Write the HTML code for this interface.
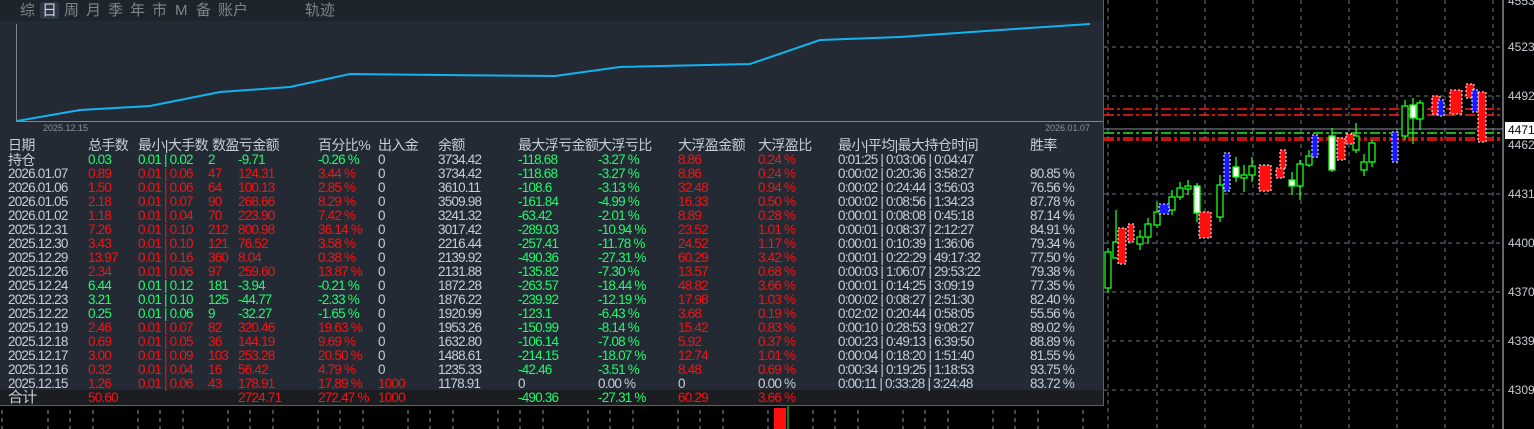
<!DOCTYPE html>
<html><head><meta charset="utf-8"><style>
*{margin:0;padding:0;box-sizing:border-box}
body{width:1534px;height:429px;background:#000;position:relative;overflow:hidden;font-family:"Liberation Sans","Noto Sans CJK SC",sans-serif}
#panel{position:absolute;left:0;top:0;width:1104px;height:406px;background:#232a33;border-right:1px solid #5a6270;border-bottom:1px solid #5a6270}
#tabs{position:absolute;left:0;top:0;width:1103px;height:21px;background:#1e242b}
#tabs span{position:absolute;top:2px;font-size:15px;color:#7d848d;line-height:17px}
#tabs .on{background:#2e3744;color:#c9d6ea;padding:0 2px;margin-left:-2px;border-radius:2px}
.r{position:absolute;left:0;width:1103px;height:14px;line-height:14px;font-size:13.5px;letter-spacing:-0.8px;color:#c6cedb;white-space:nowrap}
.r span{position:absolute}
.h{font-size:14px;letter-spacing:-0.6px;height:16px;line-height:16px}
.g{color:#19ff6c}.d{color:#ff1010}
.c0{left:8px}.c1{left:88px}.c2{left:138px}.c3{left:208px}.c4{left:238px}.c5{left:318px}.c6{left:378px}.c7{left:438px}.c8{left:518px}.c9{left:598px}.c10{left:678px}.c11{left:758px}.c12{left:838px}.c13{left:1030px}
#tot{position:absolute;left:0;top:390px;width:1103px;height:15px;background:#1b1d21}
.ax{position:absolute;left:1508px;font-size:12px;color:#c8ccd2}
</style></head><body>
<svg style="position:absolute;left:0;top:0" width="1534" height="429">
<g stroke="#6b7888" stroke-dasharray="4,4" stroke-width="1">
<line x1="1104" y1="47" x2="1503" y2="47"/><line x1="1104" y1="96" x2="1503" y2="96"/><line x1="1104" y1="194" x2="1503" y2="194"/><line x1="1104" y1="243" x2="1503" y2="243"/><line x1="1104" y1="292" x2="1503" y2="292"/><line x1="1104" y1="341" x2="1503" y2="341"/><line x1="1104" y1="390" x2="1503" y2="390"/>
<line x1="1108" y1="0" x2="1108" y2="429"/><line x1="1157" y1="0" x2="1157" y2="429"/><line x1="1205" y1="0" x2="1205" y2="429"/><line x1="1253" y1="0" x2="1253" y2="429"/><line x1="1301" y1="0" x2="1301" y2="429"/><line x1="1349" y1="0" x2="1349" y2="429"/><line x1="1397" y1="0" x2="1397" y2="429"/><line x1="1445" y1="0" x2="1445" y2="429"/><line x1="1493" y1="0" x2="1493" y2="429"/>
</g>
<g stroke="#8a95a3" stroke-dasharray="4,4">
<line x1="2" y1="410" x2="2" y2="429"/><line x1="48" y1="410" x2="48" y2="429"/><line x1="70" y1="410" x2="70" y2="429"/><line x1="93" y1="410" x2="93" y2="429"/><line x1="138" y1="410" x2="138" y2="429"/><line x1="160" y1="410" x2="160" y2="429"/><line x1="183" y1="410" x2="183" y2="429"/><line x1="228" y1="410" x2="228" y2="429"/><line x1="250" y1="410" x2="250" y2="429"/><line x1="273" y1="410" x2="273" y2="429"/><line x1="318" y1="410" x2="318" y2="429"/><line x1="340" y1="410" x2="340" y2="429"/><line x1="363" y1="410" x2="363" y2="429"/><line x1="408" y1="410" x2="408" y2="429"/><line x1="430" y1="410" x2="430" y2="429"/><line x1="453" y1="410" x2="453" y2="429"/><line x1="498" y1="410" x2="498" y2="429"/><line x1="520" y1="410" x2="520" y2="429"/><line x1="543" y1="410" x2="543" y2="429"/><line x1="588" y1="410" x2="588" y2="429"/><line x1="610" y1="410" x2="610" y2="429"/><line x1="633" y1="410" x2="633" y2="429"/><line x1="678" y1="410" x2="678" y2="429"/><line x1="700" y1="410" x2="700" y2="429"/><line x1="723" y1="410" x2="723" y2="429"/><line x1="768" y1="410" x2="768" y2="429"/><line x1="813" y1="410" x2="813" y2="429"/><line x1="835" y1="410" x2="835" y2="429"/><line x1="858" y1="410" x2="858" y2="429"/><line x1="903" y1="410" x2="903" y2="429"/><line x1="925" y1="410" x2="925" y2="429"/><line x1="948" y1="410" x2="948" y2="429"/><line x1="993" y1="410" x2="993" y2="429"/><line x1="1015" y1="410" x2="1015" y2="429"/><line x1="1038" y1="410" x2="1038" y2="429"/><line x1="1083" y1="410" x2="1083" y2="429"/>
</g>
<rect x="774" y="408" width="12" height="21" fill="#ff1010"/><line x1="788" y1="406" x2="788" y2="429" stroke="#19ff2a"/>
<line x1="1503" y1="0" x2="1503" y2="429" stroke="#c8ccd2"/>
<g stroke-width="1.5" stroke-dasharray="10,3,3,3"><line x1="1104" y1="109" x2="1503" y2="109" stroke="#ff1a1a"/><line x1="1104" y1="115" x2="1503" y2="115" stroke="#ff1a1a"/><line x1="1104" y1="133" x2="1503" y2="133" stroke="#22ee22"/><line x1="1104" y1="138" x2="1503" y2="138" stroke="#ff1a1a"/><line x1="1104" y1="140" x2="1503" y2="140" stroke="#ff1a1a"/></g>
<line x1="1104" y1="129" x2="1503" y2="129" stroke="#8a929c"/>
<g stroke="#19ff19" stroke-width="1.3" fill="#000">
<line x1="1108" y1="248" x2="1108" y2="293"/><rect x="1105" y="252" width="6" height="36"/>
<line x1="1116" y1="210" x2="1116" y2="258"/><rect x="1113" y="242" width="6" height="16"/>
<line x1="1140" y1="230" x2="1140" y2="250"/><rect x="1137" y="237" width="6" height="7"/>
<line x1="1148" y1="218" x2="1148" y2="244"/><rect x="1145" y="224" width="6" height="13"/>
<line x1="1157" y1="202" x2="1157" y2="228"/><rect x="1154" y="212" width="6" height="13"/>
<line x1="1172" y1="190" x2="1172" y2="215"/><rect x="1169" y="197" width="6" height="13"/>
<line x1="1180" y1="182" x2="1180" y2="200"/><rect x="1177" y="188" width="6" height="9"/>
<line x1="1188" y1="180" x2="1188" y2="195"/><rect x="1185" y="186" width="6" height="3"/>
<line x1="1197" y1="183" x2="1197" y2="222"/><rect x="1194" y="186" width="6" height="27" fill="#fff"/>
<line x1="1220" y1="175" x2="1220" y2="222"/><rect x="1217" y="185" width="6" height="32"/>
<line x1="1236" y1="157" x2="1236" y2="182"/><rect x="1233" y="167" width="6" height="10" fill="#fff"/>
<line x1="1244" y1="165" x2="1244" y2="192"/><rect x="1241" y="175" width="6" height="3"/>
<line x1="1252" y1="157" x2="1252" y2="182"/><rect x="1249" y="166" width="6" height="9"/>
<line x1="1292" y1="172" x2="1292" y2="195"/><rect x="1289" y="180" width="6" height="6" fill="#fff"/>
<line x1="1300" y1="160" x2="1300" y2="200"/><rect x="1297" y="164" width="6" height="22"/>
<line x1="1309" y1="150" x2="1309" y2="167"/><rect x="1306" y="156" width="6" height="9"/>
<line x1="1332" y1="128" x2="1332" y2="172"/><rect x="1329" y="136" width="6" height="34" fill="#fff"/>
<line x1="1356" y1="123" x2="1356" y2="153"/><rect x="1353" y="136" width="6" height="14"/>
<line x1="1364" y1="154" x2="1364" y2="176"/><rect x="1361" y="162" width="6" height="8"/>
<line x1="1372" y1="140" x2="1372" y2="167"/><rect x="1369" y="143" width="6" height="19"/>
<line x1="1405" y1="100" x2="1405" y2="140"/><rect x="1402" y="106" width="6" height="30"/>
<line x1="1413" y1="98" x2="1413" y2="144"/><rect x="1410" y="105" width="6" height="13" fill="#fff"/>
<line x1="1420" y1="100" x2="1420" y2="130"/><rect x="1417" y="103" width="6" height="16"/>
</g>
<g fill="#ff1010" stroke="#fff" stroke-width="1" stroke-dasharray="2,2">
<rect x="1118" y="228" width="8" height="36"/><rect x="1128" y="224" width="6" height="18"/><rect x="1199" y="212" width="12" height="26"/><rect x="1259" y="165" width="12" height="26"/><rect x="1276" y="168" width="8" height="10"/><rect x="1280" y="150" width="6" height="18"/><rect x="1337" y="138" width="8" height="22"/><rect x="1346" y="134" width="8" height="10"/><rect x="1432" y="96" width="8" height="18"/><rect x="1450" y="90" width="12" height="24"/><rect x="1466" y="84" width="8" height="14"/><rect x="1478" y="92" width="8" height="50"/>
</g>
<g fill="#1a1aff" stroke="#fff" stroke-width="1" stroke-dasharray="2,2"><rect x="1224" y="153" width="6" height="38"/><rect x="1159" y="204" width="10" height="10"/><rect x="1312" y="135" width="6" height="22"/><rect x="1392" y="132" width="6" height="30"/><rect x="1438" y="100" width="6" height="16"/><rect x="1472" y="90" width="6" height="22"/></g>
<rect x="1505" y="122" width="29" height="17" fill="#fff"/>
</svg>
<div class="ax" style="top:-6px">4553</div><div class="ax" style="top:40px">4523</div><div class="ax" style="top:89px">4492</div><div class="ax" style="top:123px;color:#000">4471</div><div class="ax" style="top:138px">4462</div><div class="ax" style="top:187px">4431</div><div class="ax" style="top:236px">4400</div><div class="ax" style="top:285px">4370</div><div class="ax" style="top:334px">4339</div><div class="ax" style="top:383px">4309</div>

<div id="panel">
<div id="tabs"><span style="left:20px">综</span><span class="on" style="left:42px">日</span><span style="left:64px">周</span><span style="left:86px">月</span><span style="left:108px">季</span><span style="left:130px">年</span><span style="left:152px">市</span><span style="left:175px">M</span><span style="left:196px">备</span><span style="left:218px">账户</span><span style="left:305px">轨迹</span></div>
<svg style="position:absolute;left:0;top:0" width="1103" height="140">
<line x1="16.5" y1="24" x2="16.5" y2="122" stroke="#7d848d"/><line x1="16" y1="121.5" x2="1103" y2="121.5" stroke="#7d848d"/>
<polyline fill="none" stroke="#10b4f0" stroke-width="2" points="17,121 80,110 150,106 220,92 290,87 350,74 440,75 555,76 620,67 750,64 820,40 900,37 1000,30 1090,24"/>
<text x="43" y="131" font-size="9" fill="#8a929c" font-family="Liberation Sans">2025.12.15</text>
<text x="1045" y="131" font-size="9" fill="#8a929c" font-family="Liberation Sans">2026.01.07</text>
</svg>
<div id="tot"></div>
<div class="r h" style="top:137px"><span class="c0">日期</span><span class="c1">总手数</span><span class="c2">最小|大手数</span><span style="left:212px">数盈亏金额</span><span class="c5">百分比%</span><span style="left:378px">出入金</span><span class="c7">余额</span><span class="c8">最大浮亏金额</span><span style="left:598px">大浮亏比</span><span style="left:678px">大浮盈金额</span><span style="left:758px">大浮盈比</span><span style="left:838px">最小|平均|最大持仓时间</span><span class="c13">胜率</span></div>
<div class="r h" style="top:152px"><span class="c0">持仓</span></div>
<div class="r g" style="top:153px"><span class="c1">0.03</span><span class="c2">0.01 | 0.02</span><span class="c3">2</span><span class="c4">-9.71</span><span class="c5">-0.26 %</span><span class="c6" style="color:#c6cedb">0</span><span class="c7" style="color:#c6cedb">3734.42</span><span class="c8">-118.68</span><span class="c9">-3.27 %</span><span class="c10 d">8.86</span><span class="c11 d">0.24 %</span><span class="c12" style="color:#c6cedb">0:01:25 | 0:03:06 | 0:04:47</span></div>

<div class="r" style="top:167px"><span class="c0">2026.01.07</span><span class="c1 d">0.89</span><span class="c2 d">0.01 | 0.06</span><span class="c3 d">47</span><span class="c4 d">124.31</span><span class="c5 d">3.44 %</span><span class="c6">0</span><span class="c7">3734.42</span><span class="c8 g">-118.68</span><span class="c9 g">-3.27 %</span><span class="c10 d">8.86</span><span class="c11 d">0.24 %</span><span class="c12">0:00:02 | 0:20:36 | 3:58:27</span><span class="c13">80.85 %</span></div>
<div class="r" style="top:181px"><span class="c0">2026.01.06</span><span class="c1 d">1.50</span><span class="c2 d">0.01 | 0.06</span><span class="c3 d">64</span><span class="c4 d">100.13</span><span class="c5 d">2.85 %</span><span class="c6">0</span><span class="c7">3610.11</span><span class="c8 g">-108.6</span><span class="c9 g">-3.13 %</span><span class="c10 d">32.48</span><span class="c11 d">0.94 %</span><span class="c12">0:00:02 | 0:24:44 | 3:56:03</span><span class="c13">76.56 %</span></div>
<div class="r" style="top:195px"><span class="c0">2026.01.05</span><span class="c1 d">2.18</span><span class="c2 d">0.01 | 0.07</span><span class="c3 d">90</span><span class="c4 d">268.66</span><span class="c5 d">8.29 %</span><span class="c6">0</span><span class="c7">3509.98</span><span class="c8 g">-161.84</span><span class="c9 g">-4.99 %</span><span class="c10 d">16.33</span><span class="c11 d">0.50 %</span><span class="c12">0:00:02 | 0:08:56 | 1:34:23</span><span class="c13">87.78 %</span></div>
<div class="r" style="top:209px"><span class="c0">2026.01.02</span><span class="c1 d">1.18</span><span class="c2 d">0.01 | 0.04</span><span class="c3 d">70</span><span class="c4 d">223.90</span><span class="c5 d">7.42 %</span><span class="c6">0</span><span class="c7">3241.32</span><span class="c8 g">-63.42</span><span class="c9 g">-2.01 %</span><span class="c10 d">8.89</span><span class="c11 d">0.28 %</span><span class="c12">0:00:01 | 0:08:08 | 0:45:18</span><span class="c13">87.14 %</span></div>
<div class="r" style="top:223px"><span class="c0">2025.12.31</span><span class="c1 d">7.26</span><span class="c2 d">0.01 | 0.10</span><span class="c3 d">212</span><span class="c4 d">800.98</span><span class="c5 d">36.14 %</span><span class="c6">0</span><span class="c7">3017.42</span><span class="c8 g">-289.03</span><span class="c9 g">-10.94 %</span><span class="c10 d">23.52</span><span class="c11 d">1.01 %</span><span class="c12">0:00:01 | 0:08:37 | 2:12:27</span><span class="c13">84.91 %</span></div>
<div class="r" style="top:237px"><span class="c0">2025.12.30</span><span class="c1 d">3.43</span><span class="c2 d">0.01 | 0.10</span><span class="c3 d">121</span><span class="c4 d">76.52</span><span class="c5 d">3.58 %</span><span class="c6">0</span><span class="c7">2216.44</span><span class="c8 g">-257.41</span><span class="c9 g">-11.78 %</span><span class="c10 d">24.52</span><span class="c11 d">1.17 %</span><span class="c12">0:00:01 | 0:10:39 | 1:36:06</span><span class="c13">79.34 %</span></div>
<div class="r" style="top:251px"><span class="c0">2025.12.29</span><span class="c1 d">13.97</span><span class="c2 d">0.01 | 0.16</span><span class="c3 d">360</span><span class="c4 d">8.04</span><span class="c5 d">0.38 %</span><span class="c6">0</span><span class="c7">2139.92</span><span class="c8 g">-490.36</span><span class="c9 g">-27.31 %</span><span class="c10 d">60.29</span><span class="c11 d">3.42 %</span><span class="c12">0:00:01 | 0:22:29 | 49:17:32</span><span class="c13">77.50 %</span></div>
<div class="r" style="top:265px"><span class="c0">2025.12.26</span><span class="c1 d">2.34</span><span class="c2 d">0.01 | 0.06</span><span class="c3 d">97</span><span class="c4 d">259.60</span><span class="c5 d">13.87 %</span><span class="c6">0</span><span class="c7">2131.88</span><span class="c8 g">-135.82</span><span class="c9 g">-7.30 %</span><span class="c10 d">13.57</span><span class="c11 d">0.68 %</span><span class="c12">0:00:03 | 1:06:07 | 29:53:22</span><span class="c13">79.38 %</span></div>
<div class="r" style="top:279px"><span class="c0">2025.12.24</span><span class="c1 g">6.44</span><span class="c2 g">0.01 | 0.12</span><span class="c3 g">181</span><span class="c4 g">-3.94</span><span class="c5 g">-0.21 %</span><span class="c6">0</span><span class="c7">1872.28</span><span class="c8 g">-263.57</span><span class="c9 g">-18.44 %</span><span class="c10 d">48.82</span><span class="c11 d">3.66 %</span><span class="c12">0:00:01 | 0:14:25 | 3:09:19</span><span class="c13">77.35 %</span></div>
<div class="r" style="top:293px"><span class="c0">2025.12.23</span><span class="c1 g">3.21</span><span class="c2 g">0.01 | 0.10</span><span class="c3 g">125</span><span class="c4 g">-44.77</span><span class="c5 g">-2.33 %</span><span class="c6">0</span><span class="c7">1876.22</span><span class="c8 g">-239.92</span><span class="c9 g">-12.19 %</span><span class="c10 d">17.98</span><span class="c11 d">1.03 %</span><span class="c12">0:00:02 | 0:08:27 | 2:51:30</span><span class="c13">82.40 %</span></div>
<div class="r" style="top:307px"><span class="c0">2025.12.22</span><span class="c1 g">0.25</span><span class="c2 g">0.01 | 0.06</span><span class="c3 g">9</span><span class="c4 g">-32.27</span><span class="c5 g">-1.65 %</span><span class="c6">0</span><span class="c7">1920.99</span><span class="c8 g">-123.1</span><span class="c9 g">-6.43 %</span><span class="c10 d">3.68</span><span class="c11 d">0.19 %</span><span class="c12">0:02:02 | 0:20:44 | 0:58:05</span><span class="c13">55.56 %</span></div>
<div class="r" style="top:321px"><span class="c0">2025.12.19</span><span class="c1 d">2.46</span><span class="c2 d">0.01 | 0.07</span><span class="c3 d">82</span><span class="c4 d">320.46</span><span class="c5 d">19.63 %</span><span class="c6">0</span><span class="c7">1953.26</span><span class="c8 g">-150.99</span><span class="c9 g">-8.14 %</span><span class="c10 d">15.42</span><span class="c11 d">0.83 %</span><span class="c12">0:00:10 | 0:28:53 | 9:08:27</span><span class="c13">89.02 %</span></div>
<div class="r" style="top:335px"><span class="c0">2025.12.18</span><span class="c1 d">0.69</span><span class="c2 d">0.01 | 0.05</span><span class="c3 d">36</span><span class="c4 d">144.19</span><span class="c5 d">9.69 %</span><span class="c6">0</span><span class="c7">1632.80</span><span class="c8 g">-106.14</span><span class="c9 g">-7.08 %</span><span class="c10 d">5.92</span><span class="c11 d">0.37 %</span><span class="c12">0:00:23 | 0:49:13 | 6:39:50</span><span class="c13">88.89 %</span></div>
<div class="r" style="top:349px"><span class="c0">2025.12.17</span><span class="c1 d">3.00</span><span class="c2 d">0.01 | 0.09</span><span class="c3 d">103</span><span class="c4 d">253.28</span><span class="c5 d">20.50 %</span><span class="c6">0</span><span class="c7">1488.61</span><span class="c8 g">-214.15</span><span class="c9 g">-18.07 %</span><span class="c10 d">12.74</span><span class="c11 d">1.01 %</span><span class="c12">0:00:04 | 0:18:20 | 1:51:40</span><span class="c13">81.55 %</span></div>
<div class="r" style="top:363px"><span class="c0">2025.12.16</span><span class="c1 d">0.32</span><span class="c2 d">0.01 | 0.04</span><span class="c3 d">16</span><span class="c4 d">56.42</span><span class="c5 d">4.79 %</span><span class="c6">0</span><span class="c7">1235.33</span><span class="c8 g">-42.46</span><span class="c9 g">-3.51 %</span><span class="c10 d">8.48</span><span class="c11 d">0.69 %</span><span class="c12">0:00:34 | 0:19:25 | 1:18:53</span><span class="c13">93.75 %</span></div>
<div class="r" style="top:377px"><span class="c0">2025.12.15</span><span class="c1 d">1.26</span><span class="c2 d">0.01 | 0.06</span><span class="c3 d">43</span><span class="c4 d">178.91</span><span class="c5 d">17.89 %</span><span class="c6 d">1000</span><span class="c7">1178.91</span><span class="c8">0</span><span class="c9">0.00 %</span><span class="c10">0</span><span class="c11">0.00 %</span><span class="c12">0:00:11 | 0:33:28 | 3:24:48</span><span class="c13">83.72 %</span></div>
<div class="r" style="top:391px"><span class="c0" style="font-size:15px">合计</span><span class="c1 d">50.60</span><span class="c4 d">2724.71</span><span class="c5 d">272.47 %</span><span class="c6 d">1000</span><span class="c8 g">-490.36</span><span class="c9 g">-27.31 %</span><span class="c10 d">60.29</span><span class="c11 d">3.66 %</span></div>
</div>
</body></html>
